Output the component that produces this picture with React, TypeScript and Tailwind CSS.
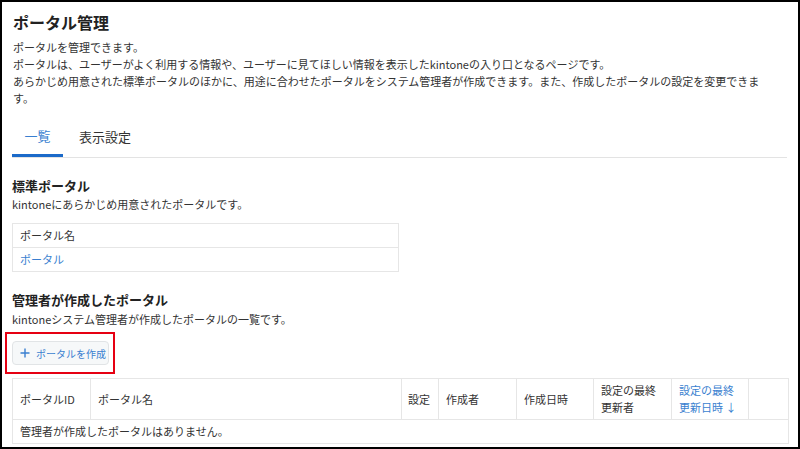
import React from "react";

const font = "font-['Noto_Sans_CJK_JP','Noto_Sans',sans-serif]";

export default function App() {
  return (
    <div className={`relative w-[800px] h-[449px] border-2 border-black bg-white text-[#333333] ${font} overflow-hidden`}>
      <div className="pl-[10px] pr-[10px] pt-[8px]">
        <h1 className="text-[16px] leading-[24px] font-bold text-[#222222] pl-[1px]">ポータル管理</h1>
        <div className="mt-[5px] pl-[1px] text-[11px] leading-[17px] max-w-[762px]">
          <p>ポータルを管理できます。</p>
          <p>ポータルは、ユーザーがよく利用する情報や、ユーザーに見てほしい情報を表示したkintoneの入り口となるページです。</p>
          <p>あらかじめ用意された標準ポータルのほかに、用途に合わせたポータルをシステム管理者が作成できます。また、作成したポータルの設定を変更できます。</p>
        </div>

        {/* tabs */}
        <div className="mt-[10px] flex border-b border-[#e3e3e3] mr-[1px]">
          <div className="w-[51px] h-[40px] -mb-px flex items-center justify-center border-b-[3px] border-[#1b6ac9] text-[13px] text-[#3a7fd0]">
            一覧
          </div>
          <div className="h-[40px] flex items-center pl-[16px] text-[13px] text-[#333333] pb-[1px]">
            表示設定
          </div>
        </div>

        {/* standard portal */}
        <h2 className="mt-[18px] text-[13px] leading-[20px] font-bold text-[#222222]">標準ポータル</h2>
        <p className="text-[11px] leading-[17px] mt-[0px]">kintoneにあらかじめ用意されたポータルです。</p>
        <table className="mt-[10px] w-[387px] border-collapse text-[11px] table-fixed">
          <tbody>
            <tr className="h-[24px]">
              <td className="border border-[#e6e6e6] pl-[7px] align-middle">ポータル名</td>
            </tr>
            <tr className="h-[24px]">
              <td className="border border-[#e6e6e6] pl-[7px] align-middle text-[#3a7fd0]">ポータル</td>
            </tr>
          </tbody>
        </table>

        {/* admin portals */}
        <h2 className="mt-[18px] text-[13px] leading-[20px] font-bold text-[#222222]">管理者が作成したポータル</h2>
        <p className="text-[11px] leading-[17px] mt-[1px]">kintoneシステム管理者が作成したポータルの一覧です。</p>

        <div className="mt-[13px] relative">
          <button className="w-[97px] h-[24px] flex items-center gap-[6px] pl-[7px] rounded-[4px] border border-[#e1e4e6] bg-[#f6f8f9] text-[10px] text-[#3a7fd0]">
            <svg width="10" height="10" viewBox="0 0 10 10" className="shrink-0">
              <path d="M5 0.5V9.5M0.5 5H9.5" stroke="#3a7fd0" strokeWidth="1.4" />
            </svg>
            <span>ポータルを作成</span>
          </button>
          <div className="absolute left-[-7px] top-[-9px] w-[110px] h-[42px] border-2 border-[#e60012] pointer-events-none" />
        </div>

        <table className="mt-[13px] w-[776px] border-collapse text-[11px] leading-[17px] table-fixed">
          <colgroup>
            <col className="w-[78px]" />
            <col className="w-[311px]" />
            <col className="w-[37px]" />
            <col className="w-[78px]" />
            <col className="w-[77px]" />
            <col className="w-[78px]" />
            <col className="w-[77px]" />
            <col className="w-[40px]" />
          </colgroup>
          <thead>
            <tr className="h-[41px]">
              <th className="border border-[#e6e6e6] pl-[7px] text-left font-normal align-middle">ポータルID</th>
              <th className="border border-[#e6e6e6] pl-[7px] text-left font-normal align-middle">ポータル名</th>
              <th className="border border-[#e6e6e6] pl-[6px] text-left font-normal align-middle">設定</th>
              <th className="border border-[#e6e6e6] pl-[7px] text-left font-normal align-middle">作成者</th>
              <th className="border border-[#e6e6e6] pl-[7px] text-left font-normal align-middle">作成日時</th>
              <th className="border border-[#e6e6e6] pl-[7px] text-left font-normal align-middle">
                設定の最終<br />更新者
              </th>
              <th className="border border-[#e6e6e6] pl-[7px] text-left font-normal align-middle text-[#3a7fd0]">
                設定の最終<br />更新日時 ↓
              </th>
              <th className="border border-[#e6e6e6]" />
            </tr>
          </thead>
          <tbody>
            <tr className="h-[24px]">
              <td colSpan={8} className="border border-[#e6e6e6] pl-[7px] align-middle">
                管理者が作成したポータルはありません。
              </td>
            </tr>
          </tbody>
        </table>
      </div>
    </div>
  );
}
